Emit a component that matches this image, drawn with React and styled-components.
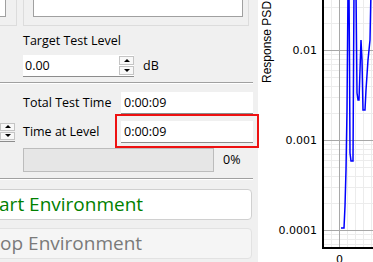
import React from "react";
import styled, { createGlobalStyle } from "styled-components";

const GlobalStyle = createGlobalStyle`
  html, body {
    margin: 0;
    padding: 0;
    background: #f0f0f0;
    overflow: hidden;
  }
`;

const Screen = styled.div`
  position: relative;
  display: flex;
  width: 373px;
  height: 262px;
  overflow: hidden;
  font-family: "Open Sans", sans-serif;
  font-size: 12.5px;
  color: #000;
`;

const Controls = styled.div`
  width: 258px;
  flex: none;
  overflow: hidden;
  display: flex;
  flex-direction: column;
  background: #f0f0f0;
`;

const TopRow = styled.div`
  display: flex;
  gap: 6px;
  height: 26px;
`;

const GroupBox = styled.div`
  box-sizing: border-box;
  width: ${(p) => p.$width}px;
  height: 26px;
  border: 1px solid #dcdcdc;
  border-top: none;
  border-left: ${(p) => (p.$open ? "none" : "1px solid #dcdcdc")};
  padding: ${(p) => (p.$open ? "0" : "0 5px 0 9px")};
`;

const TextArea = styled.div`
  box-sizing: border-box;
  width: ${(p) => (p.$width ? `${p.$width}px` : "100%")};
  height: 17px;
  background: #fff;
  border: 1px solid #a0a0a0;
  border-top: none;
  border-left: ${(p) => (p.$open ? "none" : "1px solid #a0a0a0")};
`;

const Label = styled.div`
  white-space: nowrap;
  line-height: 16px;
`;

const LevelBlock = styled.div`
  display: flex;
  flex-direction: column;
  gap: 6px;
  padding: 7px 0 0 23px;
`;

const SpinRow = styled.div`
  display: flex;
  align-items: center;
  gap: 9px;
`;

const SpinBox = styled.div`
  box-sizing: border-box;
  display: flex;
  width: 111px;
  height: 22px;
  background: #fff;
  border-bottom: 1px solid #8c8c8c;
`;

const SpinValue = styled.div`
  flex: 1;
  padding-left: 2px;
  line-height: 21px;
`;

const SpinButtons = styled.div`
  display: flex;
  flex-direction: column;
  gap: 1px;
  width: 15px;
  padding: 1px 0;
  box-sizing: border-box;
`;

const SpinButton = styled.div`
  flex: 1;
  display: flex;
  align-items: center;
  justify-content: center;
  background: #f8f8f8;
  border: 1px solid #c4c4c4;
  &::after {
    content: "";
    border-left: 3px solid transparent;
    border-right: 3px solid transparent;
    ${(p) => (p.$down ? "border-top: 3px solid #000;" : "border-bottom: 3px solid #000;")}
  }
`;

const Separator = styled.div`
  width: 253px;
  height: 0;
  margin-top: ${(p) => p.$top}px;
  border-top: 1px solid #a0a0a0;
  border-bottom: 1px solid #fff;
`;

const StatusGrid = styled.div`
  display: grid;
  grid-template-columns: 15px 90px 132px;
  grid-auto-rows: 22px;
  column-gap: 8px;
  row-gap: 7px;
  align-items: center;
  margin-top: 8px;
`;

const SideSpin = styled.div`
  box-sizing: border-box;
  display: flex;
  flex-direction: column;
  gap: 1px;
  height: 19px;
  padding-bottom: 1px;
  border-bottom: 1px solid #8c8c8c;
`;

const Field = styled.div`
  grid-column: 3;
  box-sizing: border-box;
  height: 22px;
  padding-left: 3px;
  line-height: 21px;
  background: #fff;
  border-bottom: 1px solid #8c8c8c;
`;

const ProgressRow = styled.div`
  display: flex;
  align-items: center;
  gap: 9px;
  margin: 5px 0 0 23px;
`;

const ProgressTrack = styled.div`
  box-sizing: border-box;
  width: 191px;
  height: 24px;
  background: #e6e6e6;
  border: 1px solid #bcbcbc;
`;

const ActionButton = styled.div`
  box-sizing: border-box;
  width: 379px;
  height: 31px;
  margin-left: -127px;
  margin-top: ${(p) => p.$top}px;
  border-radius: 4px;
  border: 1px solid ${(p) => (p.$enabled ? "#d0d0d0" : "#e2e2e2")};
  background: ${(p) => (p.$enabled ? "#fff" : "#f5f5f5")};
  color: ${(p) => (p.$enabled ? "#008000" : "#7a7a7a")};
  font-size: 19px;
  line-height: 29px;
  text-align: center;
  white-space: nowrap;
`;

const Highlight = styled.div`
  position: absolute;
  left: 115px;
  top: 114px;
  width: 144px;
  height: 34px;
  box-sizing: border-box;
  border: 2px solid #ee1111;
  pointer-events: none;
`;

const ChartPanel = styled.div`
  flex: 1;
  background: #fff;
`;

const decades = [50, 140, 230];
const minorY = [];
decades.forEach((y) => {
  for (let k = 2; k <= 9; k++) {
    minorY.push(y - 90 * Math.log10(k));
  }
});
minorY.push(230 + 90 * (1 - Math.log10(9)), 230 + 90 * (1 - Math.log10(8)), 230 + 90 * (1 - Math.log10(7)));
const minorX = [73, 89, 97, 105, 113];

const curve = [
  [83, 228], [86, 228], [87, 206], [88, 170], [89, 110], [90, -10],
  [91, -10], [91.5, 62], [92, 153], [93, 161], [95, 161], [96, -10],
  [98, -10], [99, 93], [100, 100], [101, 100], [102, 70], [103, 40],
  [104, 60], [105, 110], [107, 110], [108, 90], [110, 60], [112, 40],
  [113, -10], [116, -10],
];

const Chart = () => (
  <svg width="115" height="262" viewBox="0 0 115 262">
    <g stroke="#ececec" strokeWidth="1">
      {minorY.map((y) => (
        <line key={`y${y}`} x1="65" x2="115" y1={Math.round(y) + 0.5} y2={Math.round(y) + 0.5} />
      ))}
      {minorX.map((x) => (
        <line key={`x${x}`} x1={x + 0.5} x2={x + 0.5} y1="0" y2="248" />
      ))}
    </g>
    <g stroke="#a8a8a8" strokeWidth="1">
      {decades.map((y) => (
        <line key={y} x1="65" x2="115" y1={y + 0.5} y2={y + 0.5} />
      ))}
      <line x1="81.5" x2="81.5" y1="0" y2="248" />
    </g>
    <polyline
      points={curve.map((p) => p.join(",")).join(" ")}
      fill="none"
      stroke="#0000ff"
      strokeWidth="1.5"
    />
    <g stroke="#000" strokeWidth="2">
      <line x1="65" x2="65" y1="0" y2="249" />
      <line x1="64" x2="115" y1="248" y2="248" />
    </g>
    <g fontFamily="DejaVu Sans, sans-serif" fontSize="11" fill="#000">
      <text x="59" y="54" textAnchor="end">0.01</text>
      <text x="59" y="144" textAnchor="end">0.001</text>
      <text x="59" y="234" textAnchor="end">0.0001</text>
      <text x="81.5" y="263" textAnchor="middle">0</text>
    </g>
    <text
      transform="translate(13 83) rotate(-90)"
      fontFamily="Liberation Sans, sans-serif"
      fontSize="12"
      fill="#000"
    >
      Response PSD
    </text>
  </svg>
);

export default function App() {
  return (
    <>
      <GlobalStyle />
      <Screen>
        <Controls>
          <TopRow>
            <GroupBox $width={17} $open>
              <TextArea $width={6} $open />
            </GroupBox>
            <GroupBox $width={226}>
              <TextArea />
            </GroupBox>
          </TopRow>
          <LevelBlock>
            <Label>Target Test Level</Label>
            <SpinRow>
              <SpinBox>
                <SpinValue>0.00</SpinValue>
                <SpinButtons>
                  <SpinButton />
                  <SpinButton $down />
                </SpinButtons>
              </SpinBox>
              <Label>dB</Label>
            </SpinRow>
          </LevelBlock>
          <Separator $top={5} />
          <StatusGrid>
            <span />
            <Label>Total Test Time</Label>
            <Field>0:00:09</Field>
            <SideSpin>
              <SpinButton />
              <SpinButton $down />
            </SideSpin>
            <Label>Time at Level</Label>
            <Field>0:00:09</Field>
          </StatusGrid>
          <ProgressRow>
            <ProgressTrack />
            <Label>0%</Label>
          </ProgressRow>
          <Separator $top={6} />
          <ActionButton $enabled $top={9}>Start Environment</ActionButton>
          <ActionButton $top={8}>Stop Environment</ActionButton>
        </Controls>
        <ChartPanel>
          <Chart />
        </ChartPanel>
        <Highlight />
      </Screen>
    </>
  );
}
